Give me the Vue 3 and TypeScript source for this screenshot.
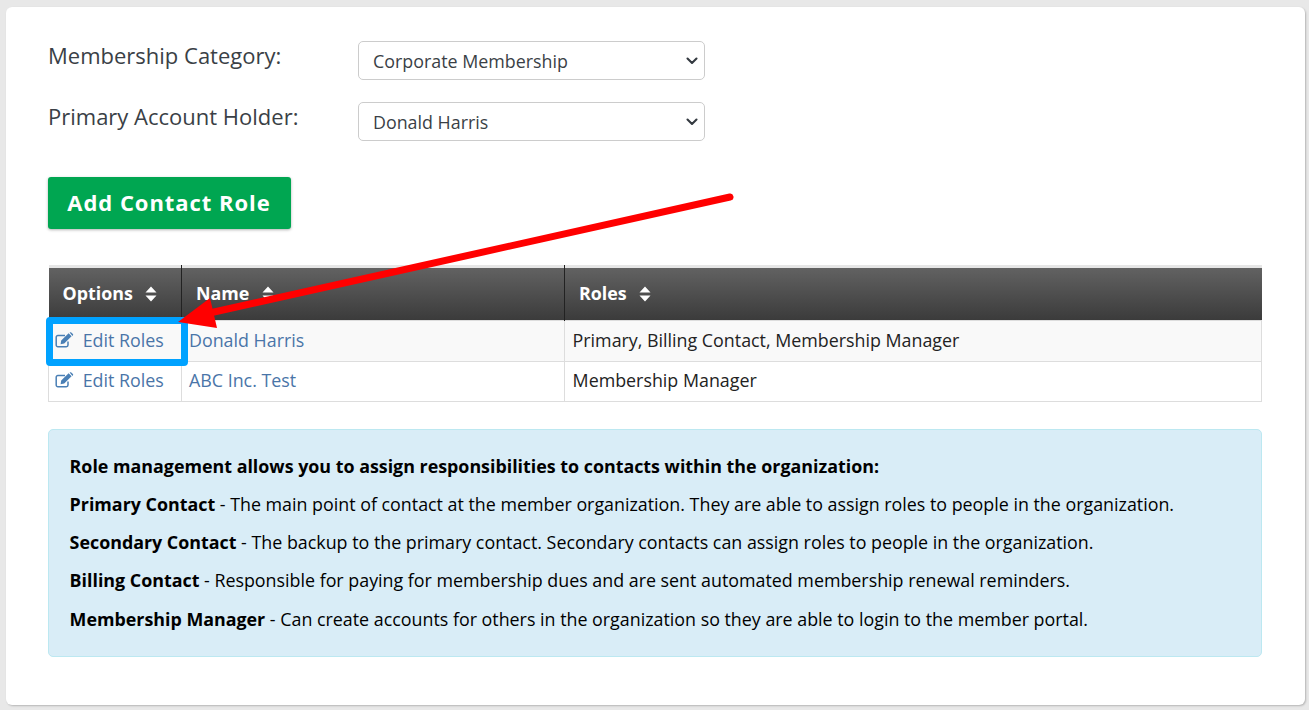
<script setup lang="ts">
const contacts = [
  { name: 'Donald Harris', roles: 'Primary, Billing Contact, Membership Manager' },
  { name: 'ABC Inc. Test', roles: 'Membership Manager' },
]
const notes = [
  { term: 'Primary Contact', text: ' - The main point of contact at the member organization. They are able to assign roles to people in the organization.' },
  { term: 'Secondary Contact', text: ' - The backup to the primary contact. Secondary contacts can assign roles to people in the organization.' },
  { term: 'Billing Contact', text: ' - Responsible for paying for membership dues and are sent automated membership renewal reminders.' },
  { term: 'Membership Manager', text: ' - Can create accounts for others in the organization so they are able to login to the member portal.' },
]
const headers = ['Options', 'Name', 'Roles']
const fields = [
  { label: 'Membership Category:', value: 'Corporate Membership' },
  { label: 'Primary Account Holder:', value: 'Donald Harris' },
]
</script>

<template>
  <div class="page">
    <main class="card">
      <div v-for="f in fields" :key="f.label" class="field">
        <label class="label">{{ f.label }}</label>
        <div class="select-wrap">
          <select class="select"><option>{{ f.value }}</option></select>
          <svg class="chev" width="12" height="8" viewBox="0 0 12 8">
            <path d="M1.5 1.5 6 6l4.5-4.5" fill="none" stroke="#343a40" stroke-width="2.1" stroke-linecap="round" stroke-linejoin="round" />
          </svg>
        </div>
      </div>
      <button class="add" type="button">Add Contact Role</button>

      <table class="table">
        <colgroup>
          <col class="c1" /><col class="c2" /><col />
        </colgroup>
        <thead>
          <tr>
            <th v-for="h in headers" :key="h">
              {{ h }}
              <svg class="sort" width="12" height="16" viewBox="0 0 12 16">
                <path d="M6 .5 11.5 6.6H.5Z M6 15.5 .5 9.4H11.5Z" fill="#fff" />
              </svg>
            </th>
          </tr>
        </thead>
        <tbody>
          <tr v-for="c in contacts" :key="c.name">
            <td>
              <a class="link">
                <svg class="edit" width="19" height="16" viewBox="0 0 19 16">
                  <path d="M13 9.5V13a1.7 1.7 0 0 1-1.7 1.7H3A1.7 1.7 0 0 1 1.2 13V5.2A1.7 1.7 0 0 1 3 3.5h7" fill="none" stroke="#4a7fb5" stroke-width="1.5" />
                  <path d="M6.2 8.6 13.6 1.2l3 3-7.4 7.4-3.6.7Z M14.6.5l.7-.3a1 1 0 0 1 1 .2l1.6 1.6a1 1 0 0 1 .1 1.3l-.5.6Z" fill="#4a7fb5" />
                </svg>
                Edit Roles
              </a>
            </td>
            <td><a class="link">{{ c.name }}</a></td>
            <td class="roles">{{ c.roles }}</td>
          </tr>
        </tbody>
      </table>

      <section class="info">
        <p class="lead">Role management allows you to assign responsibilities to contacts within the organization:</p>
        <p v-for="n in notes" :key="n.term"><b>{{ n.term }}</b>{{ n.text }}</p>
      </section>

      <div class="highlight"></div>
      <svg class="arrow" width="1309" height="710" viewBox="0 0 1309 710">
        <line x1="730" y1="197" x2="205" y2="314" stroke="#ff0000" stroke-width="7" stroke-linecap="round" />
        <path d="M178 322 210 298 217 328Z" fill="#ff0000" />
      </svg>
    </main>
  </div>
</template>

<style scoped>
.page {
  position: relative;
  width: 1309px;
  height: 710px;
  box-sizing: border-box;
  padding: 7px 4px 5px 6px;
  background: #e8e8e8;
  font-family: "Open Sans", sans-serif;
  font-size: 17.85px;
  line-height: 26.4px;
  color: #222;
  overflow: hidden;
}
.card {
  height: 100%;
  box-sizing: border-box;
  padding: 34px 43px 0 42px;
  background: #fff;
  border-radius: 6px;
  box-shadow: 1px 1px 2px rgba(0, 0, 0, 0.22);
}
.field {
  display: flex;
  align-items: flex-start;
  margin-bottom: 22px;
}
.label {
  width: 310px;
  font-size: 22px;
  line-height: 29px;
  color: #3a3f46;
}
.select-wrap {
  position: relative;
  width: 347px;
  height: 39px;
}
.select {
  display: block;
  width: 100%;
  height: 100%;
  box-sizing: border-box;
  padding: 0 30px 0 14px;
  appearance: none;
  background: #fff;
  border: 1px solid #ccc;
  border-radius: 5px;
  font-family: inherit;
  font-size: 17.85px;
  color: #3a3f46;
}
.chev {
  position: absolute;
  right: 7px;
  top: 16px;
  pointer-events: none;
}
.add {
  display: block;
  margin-top: 36px;
  width: 243px;
  height: 52px;
  padding: 0 1px 2px 0;
  border: 0;
  border-radius: 3px;
  background: #00a651;
  box-shadow: 0 1px 3px rgba(0, 0, 0, 0.3);
  color: #fff;
  font-family: inherit;
  font-size: 22px;
  font-weight: 700;
  letter-spacing: 0.95px;
}
.table {
  width: 1214px;
  margin-top: 36px;
  border-collapse: collapse;
  table-layout: fixed;
}
.c1 { width: 133px; }
.c2 { width: 383px; }
thead tr {
  background: linear-gradient(#646464, #3b3b3b);
}
th {
  height: 55px;
  box-sizing: border-box;
  padding: 1px 14px 0;
  border-left: 1px solid #222;
  box-shadow: inset 0 3px 0 #e6e6e6;
  color: #fff;
  font-weight: 700;
  font-size: 17.85px;
  text-align: left;
}
th:first-child {
  border-left: 0;
}
.sort {
  margin-left: 8px;
  vertical-align: -2px;
}
td {
  padding: 5.6px 7px 7px;
  border: 1px solid #ddd;
  color: #222;
}
tbody tr:first-child td {
  padding-top: 6.5px;
  padding-bottom: 7.2px;
}
td.roles {
  padding-left: 7.6px;
}
tbody tr:first-child {
  background: #f9f9f9;
}
.link {
  color: #4a75a8;
}
.edit {
  margin-left: -1px;
  margin-right: 4px;
  vertical-align: -1px;
}
.info {
  margin-top: 27.1px;
  height: 228px;
  box-sizing: border-box;
  padding: 22.6px 21px 0 20.6px;
  background: #d9edf7;
  border: 1px solid #bce8f1;
  border-radius: 5px;
  color: #000;
}
.info p {
  margin: 0 0 12px;
}
.info .lead {
  margin: 0.4px 0 11.6px;
  font-weight: 700;
}
.highlight {
  position: absolute;
  left: 46px;
  top: 317px;
  width: 142px;
  height: 49px;
  box-sizing: border-box;
  border: 7px solid #00a2ff;
  border-radius: 4px;
}
.arrow {
  position: absolute;
  left: 0;
  top: 0;
  pointer-events: none;
}
</style>
